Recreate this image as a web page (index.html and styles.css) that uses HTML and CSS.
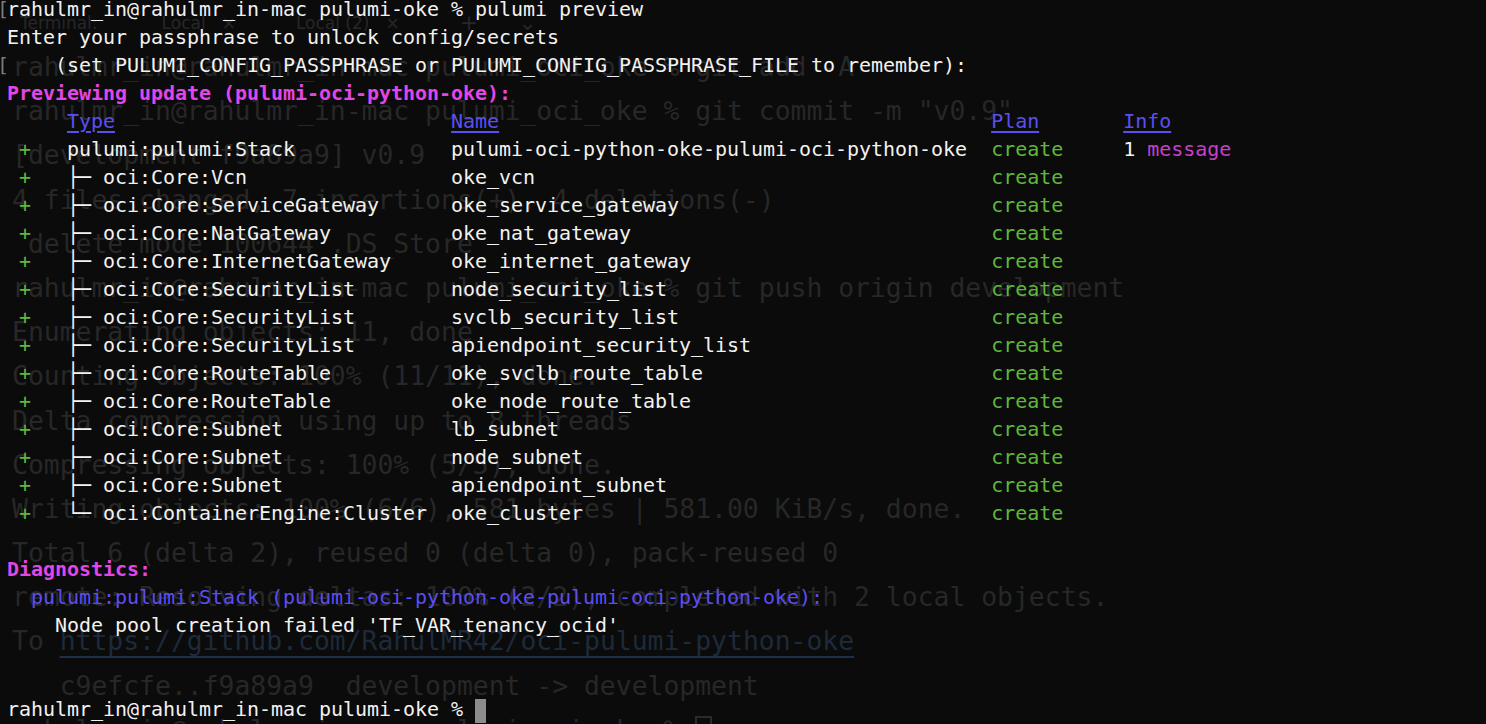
FILE: index.html
```html
<!DOCTYPE html>
<html>
<head>
  <title>Terminal - pulumi preview</title>
  <link rel="stylesheet" href="styles.css">
</head>
<body>
  <div id="screen">
    <!-- window behind the transparent terminal -->
    <div id="ghost">
      <div class="tabs">
        <span class="tab-title">Terminal:</span>
        <span class="tab">Local</span><span class="tab-x">&times;</span>
        <span class="tab">Local (2)</span><span class="tab-x">&times;</span>
        <span class="tab-add">+</span><span class="tab-more">&#8964;</span>
      </div>
      <div class="gline">rahulmr_in@rahulmr_in-mac pulumi_oci_oke % git add -A</div>
      <div class="gline">rahulmr_in@rahulmr_in-mac pulumi_oci_oke % git commit -m "v0.9"</div>
      <div class="gline">[development f9a89a9] v0.9</div>
      <div class="gline">4 files changed, 7 insertions(+), 4 deletions(-)</div>
      <div class="gline"> delete mode 100644 .DS_Store</div>
      <div class="gline">rahulmr_in@rahulmr_in-mac pulumi_oci_oke % git push origin development</div>
      <div class="gline">Enumerating objects: 11, done.</div>
      <div class="gline">Counting objects: 100% (11/11), done.</div>
      <div class="gline">Delta compression using up to 8 threads</div>
      <div class="gline">Compressing objects: 100% (5/5), done.</div>
      <div class="gline">Writing objects: 100% (6/6), 581 bytes | 581.00 KiB/s, done.</div>
      <div class="gline">Total 6 (delta 2), reused 0 (delta 0), pack-reused 0</div>
      <div class="gline">remote: Resolving deltas: 100% (2/2), completed with 2 local objects.</div>
      <div class="gline">To <span class="glink">https://github.com/RahulMR42/oci-pulumi-python-oke</span></div>
      <div class="gline">   c9efcfe..f9a89a9  development -&gt; development</div>
      <div class="gline">rahulmr_in@rahulmr_in-mac pulumi_oci_oke % <span class="gcursor"> </span></div>
    </div>

    <div id="term">
      <div class="line"><span class="mark">[</span>rahulmr_in@rahulmr_in-mac pulumi-oke % pulumi preview</div>
      <div class="line">Enter your passphrase to unlock config/secrets</div>
      <div class="line"><span class="mark">[</span>    (set PULUMI_CONFIG_PASSPHRASE or PULUMI_CONFIG_PASSPHRASE_FILE to remember):</div>
      <div class="line title">Previewing update (pulumi-oci-python-oke):</div>
      <div class="line">     <span class="head">Type</span>                            <span class="head">Name</span>                                         <span class="head">Plan</span>       <span class="head">Info</span></div>
      <div class="line"> <span class="plus">+</span>   pulumi:pulumi:Stack             pulumi-oci-python-oke-pulumi-oci-python-oke  <span class="create">create</span>     1 <span class="msg">message</span></div>
      <div class="line"> <span class="plus">+</span>   ├─ oci:Core:Vcn                 oke_vcn                                      <span class="create">create</span></div>
      <div class="line"> <span class="plus">+</span>   ├─ oci:Core:ServiceGateway      oke_service_gateway                          <span class="create">create</span></div>
      <div class="line"> <span class="plus">+</span>   ├─ oci:Core:NatGateway          oke_nat_gateway                              <span class="create">create</span></div>
      <div class="line"> <span class="plus">+</span>   ├─ oci:Core:InternetGateway     oke_internet_gateway                         <span class="create">create</span></div>
      <div class="line"> <span class="plus">+</span>   ├─ oci:Core:SecurityList        node_security_list                           <span class="create">create</span></div>
      <div class="line"> <span class="plus">+</span>   ├─ oci:Core:SecurityList        svclb_security_list                          <span class="create">create</span></div>
      <div class="line"> <span class="plus">+</span>   ├─ oci:Core:SecurityList        apiendpoint_security_list                    <span class="create">create</span></div>
      <div class="line"> <span class="plus">+</span>   ├─ oci:Core:RouteTable          oke_svclb_route_table                        <span class="create">create</span></div>
      <div class="line"> <span class="plus">+</span>   ├─ oci:Core:RouteTable          oke_node_route_table                         <span class="create">create</span></div>
      <div class="line"> <span class="plus">+</span>   ├─ oci:Core:Subnet              lb_subnet                                    <span class="create">create</span></div>
      <div class="line"> <span class="plus">+</span>   ├─ oci:Core:Subnet              node_subnet                                  <span class="create">create</span></div>
      <div class="line"> <span class="plus">+</span>   ├─ oci:Core:Subnet              apiendpoint_subnet                           <span class="create">create</span></div>
      <div class="line"> <span class="plus">+</span>   └─ oci:ContainerEngine:Cluster  oke_cluster                                  <span class="create">create</span></div>
      <div class="line"> </div>
      <div class="line title">Diagnostics:</div>
      <div class="line">  <span class="stack">pulumi:pulumi:Stack (pulumi-oci-python-oke-pulumi-oci-python-oke):</span></div>
      <div class="line">    Node pool creation failed 'TF_VAR_tenancy_ocid'</div>
      <div class="line"> </div>
      <div class="line"> </div>
      <div class="line">rahulmr_in@rahulmr_in-mac pulumi-oke % <span class="cursor"> </span></div>
    </div>
  </div>
</body>
</html>
```

FILE: styles.css
```css
body {
    margin: 0;
    background-color: #0b0b0b;
    overflow: hidden;
    }

#screen {
    position: relative;
    height: 724px;
    overflow: hidden;
    }

/* the faded window showing through */
#ghost {
    position: absolute;
    top: 0;
    left: 0;
    right: 0;
    bottom: 0;
    color: #272727;
    font-family: "DejaVu Sans Mono", monospace;
    font-size: 26.4px;
    }

.tabs {
    display: flex;
    align-items: center;
    height: 45px;
    padding-left: 20px;
    font-family: "DejaVu Sans", sans-serif;
    font-size: 17px;
    }

.tab-title {
    margin-right: 64px;
    }

.tab {
    margin-right: 16px;
    }

.tab-x {
    margin-right: 60px;
    }

.tab-add {
    margin-right: 40px;
    font-size: 22px;
    }

.tab-more {
    font-size: 22px;
    }

.gline {
    height: 44.2px;
    line-height: 44.2px;
    padding-left: 12px;
    white-space: pre;
    }

.glink {
    color: #1d2a3a;
    text-decoration: underline;
    text-decoration-color: #1e3048;
    text-underline-offset: 6px;
    text-decoration-thickness: 2px;
    }

.gcursor {
    display: inline-block;
    width: 13px;
    height: 26px;
    border: 2px solid #2a2a2a;
    vertical-align: middle;
    }

/* live terminal output */
#term {
    position: relative;
    margin-top: -5px;
    color: #f2f2f2;
    font-family: "DejaVu Sans Mono", monospace;
    font-size: 20px;
    letter-spacing: -0.04px;
    }

.line {
    position: relative;
    height: 28px;
    line-height: 28px;
    padding-left: 7px;
    white-space: pre;
    }

.mark {
    position: absolute;
    left: -3px;
    color: #7a7a7a;
    }

.title {
    color: #e246ea;
    font-weight: bold;
    }

.head {
    color: #5a4ff2;
    text-decoration: underline;
    text-underline-offset: 3px;
    }

.plus,
.create {
    color: #5fb83b;
    }

.msg {
    color: #c440cc;
    }

.stack {
    color: #5b4ef4;
    }

.cursor {
    display: inline-block;
    width: 11px;
    height: 24px;
    background-color: #8c8c8c;
    vertical-align: middle;
    }
```
